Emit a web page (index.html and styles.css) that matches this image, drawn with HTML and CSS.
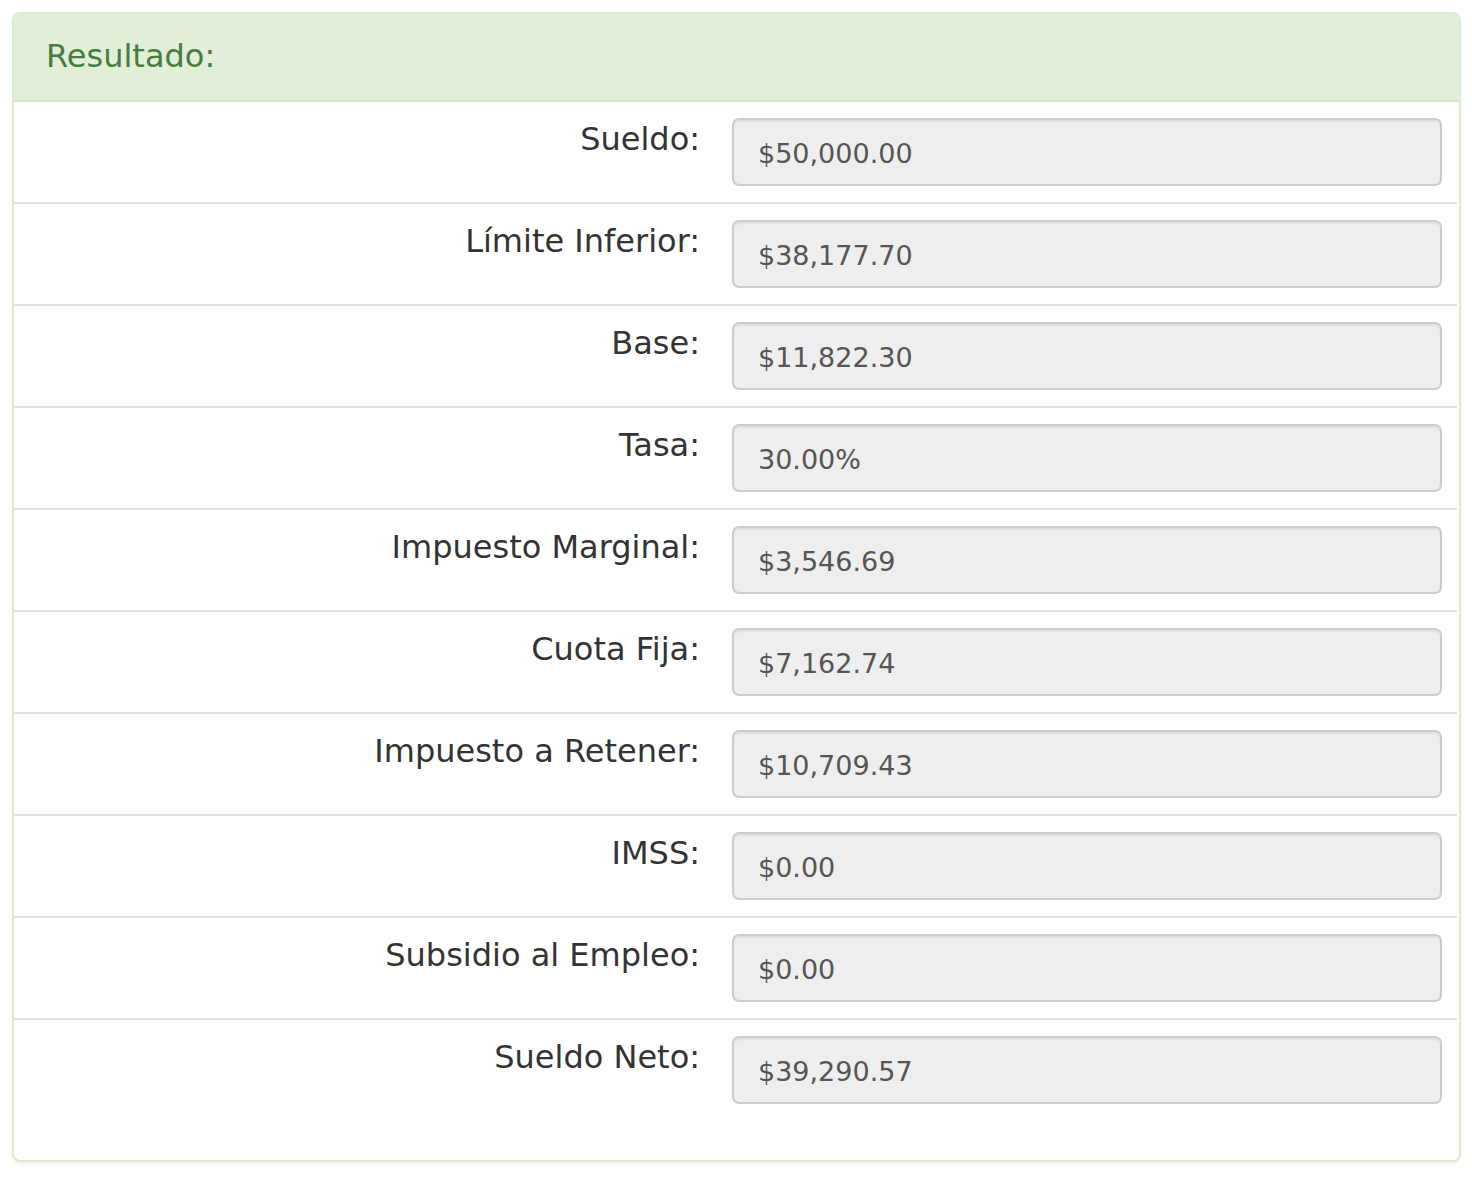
FILE: index.html
```html
<!DOCTYPE html>
<html lang="es">
<head>
  <meta charset="UTF-8">
  <meta name="viewport" content="width=device-width, initial-scale=1.0">
  <title>Resultado</title>
  <link rel="stylesheet" href="styles.css">
</head>
<body>
  <div class="panel">
    <div class="panel-heading">
      <h3 class="panel-title">Resultado:</h3>
    </div>
    <div class="panel-body">
      <div class="form-row">
        <label class="row-label">Sueldo:</label>
        <div class="field">$50,000.00</div>
      </div>
      <div class="form-row">
        <label class="row-label">Límite Inferior:</label>
        <div class="field">$38,177.70</div>
      </div>
      <div class="form-row">
        <label class="row-label">Base:</label>
        <div class="field">$11,822.30</div>
      </div>
      <div class="form-row">
        <label class="row-label">Tasa:</label>
        <div class="field">30.00%</div>
      </div>
      <div class="form-row">
        <label class="row-label">Impuesto Marginal:</label>
        <div class="field">$3,546.69</div>
      </div>
      <div class="form-row">
        <label class="row-label">Cuota Fija:</label>
        <div class="field">$7,162.74</div>
      </div>
      <div class="form-row">
        <label class="row-label">Impuesto a Retener:</label>
        <div class="field">$10,709.43</div>
      </div>
      <div class="form-row">
        <label class="row-label">IMSS:</label>
        <div class="field">$0.00</div>
      </div>
      <div class="form-row">
        <label class="row-label">Subsidio al Empleo:</label>
        <div class="field">$0.00</div>
      </div>
      <div class="form-row last">
        <label class="row-label">Sueldo Neto:</label>
        <div class="field">$39,290.57</div>
      </div>
    </div>
  </div>
</body>
</html>
```

FILE: styles.css
```css
body {
  font-family: 'DejaVu Sans', sans-serif;
  background-color: #fff;
  margin: 0;
  padding: 12px 11px 12px 12px;
}

.panel {
  border: 2px solid #dde9d1; /* soft green border */
  border-radius: 8px;
  background: #fff;
  box-shadow: 0 2px 3px rgba(0, 0, 0, 0.05);
  overflow: hidden;
}

.panel-heading {
  height: 88px;
  box-sizing: border-box;
  display: flex;
  align-items: center;
  padding: 0 32px 3px;
  background-color: #e1efd9;
  border-bottom: 2px solid #d8e5cd;
}

.panel-title {
  margin: 0;
  font-size: 32px;
  font-weight: normal;
  color: #4a7b41;
}

.panel-body {
  padding-bottom: 40px;
}

.form-row {
  display: grid;
  grid-template-columns: 686px 1fr;
  column-gap: 32px;
  margin-right: 2px;
  padding: 16px 15px 16px 0;
  border-bottom: 2px solid #e2e2e2;
}

.form-row.last {
  border-bottom: none;
}

.row-label {
  text-align: right;
  font-size: 32px;
  line-height: 38px;
  padding-top: 2px;
  color: #333;
}

.field {
  height: 60px;
  line-height: 60px;
  padding: 4px 24px 0;
  font-size: 27px;
  color: #555;
  background-color: #eee;
  border: 2px solid #ccc;
  border-radius: 7px;
  box-shadow: inset 0 2px 2px rgba(0, 0, 0, 0.06);
}
```
